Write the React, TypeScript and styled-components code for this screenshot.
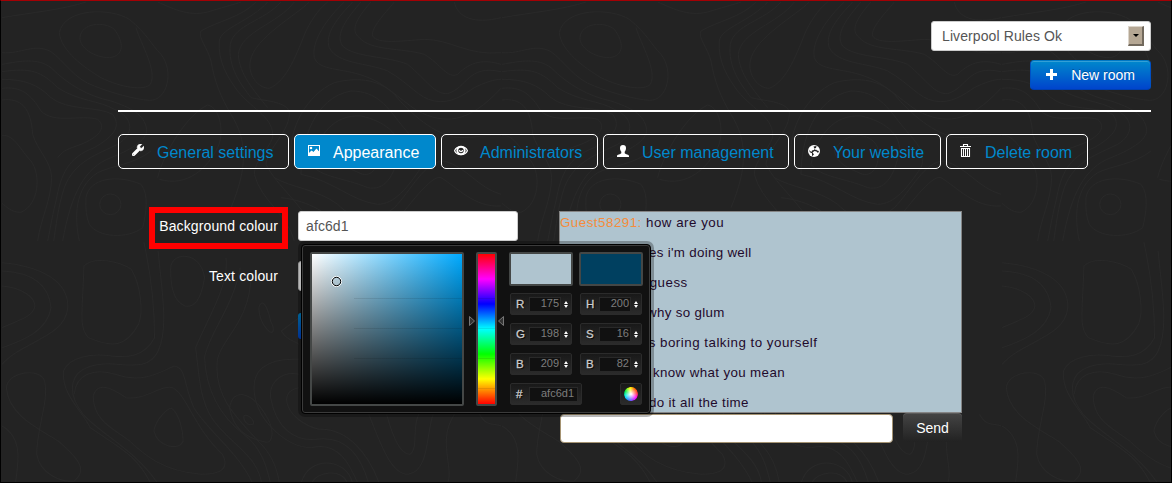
import React from 'react';
import styled, { createGlobalStyle } from 'styled-components';
import { FaWrench } from 'react-icons/fa';

const Global = createGlobalStyle`
  * { box-sizing: border-box; }
  body { margin: 0; background: #222; font: 14px/20px "Liberation Sans", Arial, sans-serif; }
`;

const Page = styled.main`
  position: relative;
  width: 1172px;
  height: 483px;
  overflow: hidden;
  padding: 20px 20px 0 117px;
  border: 1px solid #000;
  border-top-color: #a40004;
  background: #232323;
  color: #fff;
`;

const Contours = styled.svg`
  position: absolute;
  inset: 0;
  fill: none;
  stroke: #292929;
  stroke-width: 3;
`;

const Content = styled.div`
  position: relative;
  display: flex;
  flex-direction: column;
`;

const Header = styled.header`
  display: flex;
  flex-direction: column;
  align-items: flex-end;
  gap: 9px;
`;

const RoomSelect = styled.div`
  display: flex;
  align-items: center;
  justify-content: space-between;
  width: 220px;
  height: 30px;
  padding: 0 6px 0 10px;
  border: 1px solid #ccc;
  border-radius: 3px;
  background: #fff;
  color: #555;
  letter-spacing: 0.1px;
`;

const SelectArrow = styled.span`
  display: grid;
  place-items: center;
  width: 16px;
  height: 20px;
  border: 1px solid;
  border-width: 1px 2px 2px 1px;
  border-color: #dcd5cb #72695d #72695d #dcd5cb;
  background: #b5a794;
`;

const NewRoom = styled.button`
  display: flex;
  align-items: center;
  gap: 13px;
  height: 30px;
  padding: 0 15px 0 15px;
  border: 1px solid;
  border-color: #0077c4 #0050c4 #003fb0;
  border-radius: 4px;
  background: linear-gradient(#0088cc, #0044cc);
  box-shadow: inset 0 1px 0 rgba(255, 255, 255, 0.2);
  color: #fff;
  font: inherit;
  text-shadow: 0 -1px 0 rgba(0, 0, 0, 0.25);
`;

const Divider = styled.hr`
  width: 100%;
  height: 2px;
  margin: 20px 0 22px;
  border: 0;
  background: #fff;
`;

const Tabs = styled.nav`
  display: flex;
  gap: 5px;
`;

const Tab = styled.a<{ $active?: boolean; $width: number }>`
  display: flex;
  align-items: center;
  gap: 12px;
  width: ${(p) => p.$width}px;
  height: 35px;
  padding: 2px 0 0 12px;
  border: 1px solid #fff;
  border-radius: 5px;
  background: ${(p) => (p.$active ? '#0088cc' : 'transparent')};
  color: ${(p) => (p.$active ? '#fff' : '#0088cc')};
  font-size: 16px;
  white-space: nowrap;
`;

const TabIcon = styled.span`
  display: flex;
  width: 14px;
  height: 14px;
  margin-top: -4px;
  color: #fff;
`;

const WrenchIcon = styled(FaWrench)`
  margin: 1px;
  stroke: currentColor;
  stroke-width: 30px;
  transform: translateY(-1px);
`;

const Columns = styled.section`
  display: flex;
  gap: 41px;
  margin-top: 42px;
`;

const Form = styled.form`
  display: flex;
  flex-direction: column;
  gap: 20px;
  width: 400px;
`;

const Field = styled.div`
  position: relative;
  display: flex;
  gap: 20px;
`;

const Label = styled.label<{ $marked?: boolean }>`
  position: relative;
  width: 160px;
  line-height: 30px;
  text-align: right;
  letter-spacing: 0.12px;
  &::before {
    content: '';
    display: ${(p) => (p.$marked ? 'block' : 'none')};
    position: absolute;
    inset: -4px -10px -8px 31px;
    border: 6px solid #f00;
  }
`;

const ColourInput = styled.input`
  width: 220px;
  height: 30px;
  padding: 0 7px;
  border: 1px solid #ccc;
  border-radius: 3px;
  background: #fff;
  color: #555;
  font: inherit;
  letter-spacing: 0.1px;
`;

const Save = styled.button`
  width: 62px;
  height: 26px;
  margin: 2px 0 0 180px;
  border: 0;
  border-radius: 3px;
  background: linear-gradient(#0088cc, #0044cc);
`;

const Picker = styled.div`
  position: absolute;
  z-index: 2;
  top: 33px;
  left: 183px;
  display: flex;
  width: 350px;
  height: 170px;
  padding: 6px 7px;
  border: 1px solid #000;
  border-radius: 4px;
  background: #111;
  box-shadow: inset 0 0 0 1px #3b3b3b, 0 0 0 3px rgba(0, 0, 0, 0.28);
`;

const Well = styled.div`
  position: relative;
  margin: 1px;
  border: 2px solid #444746;
  border-radius: 2px;
`;

const faint = 'linear-gradient(rgba(0,0,0,.09), rgba(0,0,0,.09)) no-repeat';

const Saturation = styled(Well)`
  width: 154px;
  height: 154px;
  background:
    ${faint} 42px 44px / 108px 1px, ${faint} 42px 74px / 108px 1px, ${faint} 42px 104px / 108px 1px,
    linear-gradient(to top, #000, transparent) padding-box,
    linear-gradient(to right, #fff, #00aaff) padding-box;
`;

const Cursor = styled.svg`
  position: absolute;
  left: 19px;
  top: 22px;
`;

const HueColumn = styled.div`
  display: flex;
  align-items: center;
  margin-left: 4px;
`;

const HueArrow = styled.svg`
  margin-bottom: 17px;
  fill: #333;
  stroke: #777;
`;

const Hue = styled(Well)`
  width: 21px;
  height: 154px;
  margin: 0 1px;
  background:
    ${faint} 0 44px / 17px 1px, ${faint} 0 74px / 17px 1px, ${faint} 0 104px / 17px 1px, ${faint} 0 134px / 17px 1px,
    linear-gradient(#f00, #f0f 16.7%, #00f 33.3%, #0ff 50%, #0f0 66.7%, #ff0 83.3%, #f00) padding-box;
`;

const Channels = styled.div`
  display: grid;
  grid-template-columns: 64px 64px;
  grid-template-rows: 41px repeat(4, 30px);
  column-gap: 6px;
  align-items: start;
  margin: 1px 0 0 5px;
`;

const Swatch = styled.div<{ $colour: string }>`
  height: 34px;
  border: 2px solid #444746;
  border-radius: 2px;
  background: ${(p) => p.$colour};
`;

const Channel = styled.div<{ $width: number }>`
  display: flex;
  width: ${(p) => p.$width}px;
  height: 22px;
  margin-left: 1px;
  padding: 3px 3px 0 5px;
  border: 1px solid #2b2b2b;
  border-radius: 2px;
  background: linear-gradient(#191919, #2b2b2b);
`;

const ChannelName = styled.span`
  width: 13px;
  color: #ccc;
  font-size: 11.5px;
  line-height: 15px;
  text-shadow: 1px 1px 1px #000;
  -webkit-text-stroke: 0.3px #ccc;
`;

const ChannelValue = styled.span<{ $width: number; $inset: number }>`
  width: ${(p) => p.$width}px;
  height: 15px;
  padding-right: ${(p) => p.$inset}px;
  border: 1px solid #292929;
  background: #111;
  color: #7d7d7d;
  font-size: 11px;
  line-height: 11px;
  text-align: right;
`;

const Spinner = styled.svg`
  margin: 4px 0 0 3px;
  fill: #fff;
`;

const WheelButton = styled.div`
  display: grid;
  place-items: center;
  justify-self: end;
  width: 22px;
  height: 22px;
  margin-right: 1px;
  border: 1px solid #2b2b2b;
  border-radius: 2px;
  background: linear-gradient(#191919, #2b2b2b);
`;

const Wheel = styled.div`
  width: 14px;
  height: 14px;
  border-radius: 50%;
  background:
    radial-gradient(#fff 5%, transparent 65%),
    conic-gradient(#ff0, #f60 12%, #f33 25%, #f0f 38%, #84f 50%, #29f 62%, #0ee 72%, #0e4 85%, #ff0);
  transform: rotate(-10deg);
`;

const Chat = styled.div`
  display: flex;
  flex-direction: column;
  width: 403px;
`;

const Messages = styled.div`
  display: flex;
  flex-direction: column;
  gap: 10px;
  height: 202px;
  overflow: hidden;
  border: 1px solid #858585;
  background: #afc4cf;
  color: #1f0a2c;
  font-size: 13.33px;
`;

const Message = styled.p<{ $indent: number; $spacing: number }>`
  flex: none;
  margin: 0;
  padding-left: ${(p) => p.$indent}px;
  line-height: 21px;
  height: 20px;
  letter-spacing: ${(p) => p.$spacing}px;
  white-space: nowrap;
`;

const Author = styled.span`
  color: #f58c3c;
`;

const Composer = styled.div`
  display: flex;
  justify-content: space-between;
`;

const MessageInput = styled.input`
  width: 333px;
  height: 29px;
  margin: 1px 0 0 1px;
  border: 1px solid #a59372;
  border-radius: 4px;
  background: #fff;
`;

const Send = styled.button`
  width: 59px;
  height: 29px;
  padding: 1px 0 0;
  border: 0;
  border-radius: 4px;
  background: linear-gradient(#444, #222);
  box-shadow: inset 0 1px 0 rgba(255, 255, 255, 0.12);
  color: #fff;
  font: inherit;
`;

const upperLines = [
  'M3,50 C90,35 190,25 255,3',
  'M175,95 C190,20 330,20 385,55 C440,100 450,130 480,160 C520,210 500,300 445,298 C400,295 330,275 280,255 C220,235 190,180 150,152 C100,125 60,160 3,155',
  'M175,95 C180,150 250,200 300,230 C360,260 430,270 448,250 C470,210 420,130 405,80',
  'M237,110 C240,65 310,60 340,85 C370,125 370,165 325,170 C280,170 235,140 237,110',
  'M3,190 C60,180 110,170 150,200 C200,250 260,285 330,300 C390,320 430,340 437,385 C440,420 380,450 330,470 C250,500 210,580 185,720',
  'M3,212 C90,200 120,210 170,260 C230,300 300,300 340,325 C400,350 400,400 350,430 C290,460 220,480 190,560 C170,620 165,680 158,720',
  'M3,235 C70,235 110,250 150,290 C200,330 290,315 335,340 C365,380 330,410 280,440 C200,470 180,520 165,600 C150,660 145,700 140,720',
  'M3,262 C60,255 90,280 120,330 C160,370 240,340 290,355 C320,380 290,410 240,430 C200,445 190,445 170,470',
  'M3,297 C60,290 90,320 95,400 C110,450 150,480 152,530 C150,600 120,650 110,720',
  'M3,403 C40,400 60,450 90,480 C120,520 115,610 60,634 C30,635 15,615 3,607',
  'M296,610 a32,31 0 1,0 64,0 a32,31 0 1,0 -64,0',
  'M255,590 C265,530 350,520 420,550 C445,580 435,640 425,680 C380,715 290,710 265,670 Q252,640 255,590',
  'M235,720 C220,650 220,560 290,515 C330,495 400,490 450,450',
  'M470,3 C520,25 570,50 630,30 C680,15 700,10 720,3',
  'M765,3 C720,50 650,60 600,90 C590,110 620,140 630,180 C640,240 660,290 690,340 C740,420 740,500 690,620',
  'M800,3 C750,60 660,80 655,120 C650,180 680,230 710,270 C760,330 820,350 815,410 C800,450 760,480 760,520 C780,600 860,640 880,720',
  'M840,3 C790,60 700,70 688,130 C680,200 720,250 750,290 C790,300 850,300 865,330 C870,390 800,440 795,490 C830,560 900,600 960,720',
  'M880,3 C830,70 720,90 712,160 C715,220 760,270 800,320',
  'M925,3 C890,40 760,110 748,180 C740,220 770,262 805,262 C860,240 890,150 915,90 C940,40 960,20 980,3',
  'M1030,3 C980,50 930,120 940,170 C955,210 1020,200 1090,225 C1150,245 1190,290 1250,330 C1330,370 1400,370 1500,262',
  'M1055,3 C1010,50 970,100 985,140 C1010,190 1100,185 1160,210 C1230,250 1250,290 1300,300 C1350,310 1390,280 1420,260 C1450,245 1480,235 1500,235',
  'M1080,3 C1040,50 1000,100 1025,135 C1060,170 1160,165 1220,190 C1280,240 1300,280 1340,278 C1400,260 1400,190 1500,212',
  'M1110,3 C1060,60 1050,90 1075,110 C1110,150 1200,140 1270,160 C1320,190 1340,235 1370,220 C1410,180 1450,175 1500,190',
  'M1180,3 C1150,40 1110,80 1115,105 C1130,130 1200,120 1270,115 C1350,115 1400,165 1500,155',
  'M1360,3 C1370,50 1420,70 1500,50',
  'M870,480 C860,380 920,280 1000,245 C1080,225 1140,240 1180,280 C1230,340 1300,400 1370,410 C1430,410 1460,400 1500,403',
  'M900,520 C900,420 940,290 1050,270 C1130,270 1160,320 1200,370 C1240,420 1280,450 1260,500 C1220,560 1180,610 1130,610 C1050,600 1000,540 900,520',
  'M930,490 C950,400 1000,340 1080,345 C1150,360 1200,400 1195,450 C1180,530 1150,570 1100,560 C1030,530 960,530 930,490',
  'M1000,450 C1030,390 1110,390 1130,440 C1140,500 1110,530 1080,518 C1040,500 1010,490 1000,450',
  'M820,530 C870,560 950,565 1010,610 C1060,660 1120,670 1180,620 C1230,570 1270,480 1330,480 C1400,500 1430,560 1500,580',
  'M840,590 C930,600 980,640 1030,680 C1080,710 1130,710 1170,680 C1220,620 1290,520 1320,530 C1370,560 1420,620 1500,615',
  'M470,530 C490,450 560,340 620,312 C660,320 670,400 650,440 C620,500 560,560 475,535',
];

const lowerLines = [
  'M3,135 C60,140 95,170 95,195 C90,230 40,240 3,260',
  'M3,90 C100,95 135,140 140,200 C130,270 60,300 3,320',
  'M3,65 C110,75 190,120 187,200 C180,290 60,300 3,370',
  'M232,75 C260,45 330,60 365,85 C390,130 400,210 385,250 C350,320 310,320 245,290 C215,260 230,200 232,75',
  'M475,80 C480,30 560,30 570,110 C560,180 540,200 515,195 C480,180 475,130 475,80',
  'M400,3 C420,100 430,200 430,290 C400,350 350,350 310,345 C250,335 190,350 175,390 C170,460 220,500 250,560 C330,620 380,640 420,729',
  'M440,30 C450,150 470,260 440,330 C410,400 330,360 280,370 C190,380 180,450 230,520 C280,580 380,630 440,729',
  'M630,50 C640,130 580,230 545,320 C555,400 555,470 590,530 C630,600 720,640 730,729',
  'M670,80 C650,200 580,280 570,350 C575,460 620,530 680,580 C730,620 745,680 755,729',
  'M700,100 C700,250 605,300 605,370 C600,470 660,530 720,600 C760,640 775,690 780,729',
  'M722,200 C730,170 745,190 755,240 C770,270 760,285 745,265 C725,240 722,220 722,200',
  'M15,440 C20,390 110,380 122,420 C135,480 100,560 100,640 C110,700 170,725 205,720 C240,690 225,660 160,600 C100,560 20,520 15,440',
  'M205,460 C210,400 260,380 320,400 C400,430 450,390 485,375 C520,380 510,430 540,500 C580,570 670,640 705,729',
  'M258,465 C270,420 310,440 350,470 C400,480 450,430 480,440 C520,460 540,560 620,640 C640,680 620,700 560,700 C450,690 400,640 360,600 C310,560 260,540 258,465',
  'M428,570 C435,530 470,500 478,502 C500,520 510,570 510,600 C500,630 440,620 428,570',
  'M640,500 C650,440 700,450 740,520 C770,570 760,610 740,603 C680,590 650,560 640,500',
  'M680,525 C690,515 712,540 706,550 C690,555 678,540 680,525',
  'M835,355 C740,350 700,390 710,460 C720,540 800,620 870,620 C950,600 980,680 1000,729',
  'M835,400 C790,390 750,420 755,470 C770,560 820,600 880,595 C970,580 1010,650 1030,729',
  'M835,440 C770,450 800,540 890,565 C970,560 1030,640 1060,729',
  'M835,230 L785,270 C800,300 825,300 835,310',
  'M870,729 C880,690 960,680 970,729',
  'M840,729 C860,640 970,650 985,729',
  'M1080,520 C1100,600 1120,640 1145,640 C1170,620 1150,560 1170,520',
  'M1030,520 C1060,600 1090,700 1140,700 C1200,690 1190,580 1210,520',
  'M1270,520 C1220,600 1270,680 1250,729',
  'M3,555 C60,590 50,660 40,729',
  'M1340,520 C1360,560 1380,545 1400,555',
];

const Terrain = () => (
  <Contours width="1170" height="482">
    <defs>
      <g id="terrain">
        <g transform="scale(.3333)">{upperLines.map((d) => <path key={d} d={d} />)}</g>
        <g transform="translate(0 240) scale(.3571 .3333)">{lowerLines.map((d) => <path key={d} d={d} />)}</g>
      </g>
    </defs>
    <use href="#terrain" />
    <use href="#terrain" x="500" />
    <use href="#terrain" x="1000" />
  </Contours>
);

const PictureIcon = () => (
  <svg width="14" height="14" fill="currentColor">
    <path fillRule="evenodd" d="M1 1h12v11H1zM2 2v7l2.500-2.500 2 1.500 3-3.500L12 7.500V2zM4 2.700a1.300 1.300 0 1 1 0 2.600 1.300 1.300 0 0 1 0-2.600z" />
    <path d="M2 9.500L4.500 7l2 1.500 3-3.500L12 8v4H2z" />
  </svg>
);
const EyeIcon = () => (
  <svg width="14" height="14" fill="none" stroke="currentColor">
    <path d="M.6 6.800C2.500 1.300 11.500 1.300 13.400 6.800 11.500 11.800 2.500 11.800.6 6.800z" strokeWidth="1.200" />
    <circle cx="7" cy="6.500" r="3.700" strokeWidth="2" />
    <path d="M5.500 6c0 2.200 3 2.200 3 0" strokeWidth="1.300" />
  </svg>
);
const UserIcon = () => (
  <svg width="14" height="14" fill="currentColor">
    <path d="M7 1c2 0 3 1.200 3 3 0 1.600-.5 2.800-1.300 3.700v1.600C9.500 10.300 13 10.500 13 12v1H1v-1c0-1.500 3.500-1.700 4.300-2.700V7.700C4.500 6.800 4 5.600 4 4c0-1.800 1-3 3-3z" />
  </svg>
);
const GlobeIcon = () => (
  <svg width="14" height="14">
    <circle cx="7" cy="7" r="6" fill="#fff" />
    <path fill="#222" d="M6.500 2.500l3-.5L9 4 7.500 4.500 7 6 5 6.500 4.500 8 3 7 2 5.500l.8 2.700 2.200 1v3L7 10.500 5.500 8.500 7.500 7l2 .5L11 9l1-2-2-.5-1-1-1 .5z" />
  </svg>
);
const TrashIcon = () => (
  <svg width="14" height="14" fill="none" stroke="currentColor">
    <path d="M1 2.500h11M4.500 2V.5h4V2M2.500 4v8.500h8V4M2 4.500h9" strokeWidth="1.100" />
    <path d="M4.500 5v7M6.500 5v7M8.500 5v7" />
  </svg>
);

const tabs = [
  { label: 'General settings', width: 171, icon: <WrenchIcon size={12} /> },
  { label: 'Appearance', width: 142, icon: <PictureIcon />, active: true },
  { label: 'Administrators', width: 157, icon: <EyeIcon /> },
  { label: 'User management', width: 186, icon: <UserIcon /> },
  { label: 'Your website', width: 147, icon: <GlobeIcon /> },
  { label: 'Delete room', width: 142, icon: <TrashIcon /> },
];

const channels = [
  ['R', '175'], ['H', '200'],
  ['G', '198'], ['S', '16'],
  ['B', '209'], ['B', '82'],
];

const messages = [
  { text: "yes i'm doing well", indent: 82, spacing: 0.31 },
  { text: 'i guess', indent: 82, spacing: 0.5 },
  { text: 'why so glum', indent: 87, spacing: 0.32 },
  { text: 'its boring talking to yourself', indent: 81, spacing: 0.5 },
  { text: 'i know what you mean', indent: 85.5, spacing: 0.38 },
  { text: 'i do it all the time', indent: 81.5, spacing: 0.36 },
];

export default function App() {
  return (
    <Page>
      <Global />
      <Terrain />
      <Content>
        <Header>
          <RoomSelect>
            Liverpool Rules Ok
            <SelectArrow>
              <svg width="6" height="3"><path d="M0 0h6L3 3z" /></svg>
            </SelectArrow>
          </RoomSelect>
          <NewRoom>
            <svg width="12" height="12"><path d="M4 0h3v4h4v3H7v4H4V7H0V4h4z" fill="#fff" /></svg>
            New room
          </NewRoom>
        </Header>
        <Divider />
        <Tabs>
          {tabs.map((tab) => (
            <Tab key={tab.label} $active={tab.active} $width={tab.width}>
              <TabIcon>{tab.icon}</TabIcon>
              {tab.label}
            </Tab>
          ))}
        </Tabs>
        <Columns>
          <Form>
            <Field>
              <Label $marked>Background colour</Label>
              <ColourInput defaultValue="afc6d1" />
              <Picker>
                <Saturation>
                  <Cursor width="11" height="11" fill="none">
                    <circle cx="5.500" cy="5.500" r="5" stroke="#fff" />
                    <circle cx="5.500" cy="5.500" r="4.200" stroke="#000" />
                  </Cursor>
                </Saturation>
                <HueColumn>
                  <HueArrow width="6" height="10"><path d="M.5.5L5.500 5l-5 4.500z" /></HueArrow>
                  <Hue />
                  <HueArrow width="6" height="10"><path d="M5.500.5L.5 5l5 4.500z" /></HueArrow>
                </HueColumn>
                <Channels>
                  <Swatch $colour="#afc4cf" />
                  <Swatch $colour="#004060" />
                  {channels.map(([name, value], i) => (
                    <Channel key={i} $width={62}>
                      <ChannelName>{name}</ChannelName>
                      <ChannelValue $width={32} $inset={1}>{value}</ChannelValue>
                      <Spinner width="4" height="8"><path d="M2 0l2 3H0zM2 7l2-3H0z" /></Spinner>
                    </Channel>
                  ))}
                  <Channel $width={72}>
                    <ChannelName>#</ChannelName>
                    <ChannelValue $width={49} $inset={3}>afc6d1</ChannelValue>
                  </Channel>
                  <WheelButton><Wheel /></WheelButton>
                </Channels>
              </Picker>
            </Field>
            <Field>
              <Label>Text colour</Label>
              <ColourInput />
            </Field>
            <Save type="button" />
          </Form>
          <Chat>
            <Messages>
              <Message $indent={0} $spacing={0.5}><Author>Guest58291:</Author> how are you</Message>
              {messages.map((m) => (
                <Message key={m.text} $indent={m.indent} $spacing={m.spacing}>{m.text}</Message>
              ))}
            </Messages>
            <Composer>
              <MessageInput />
              <Send>Send</Send>
            </Composer>
          </Chat>
        </Columns>
      </Content>
    </Page>
  );
}
